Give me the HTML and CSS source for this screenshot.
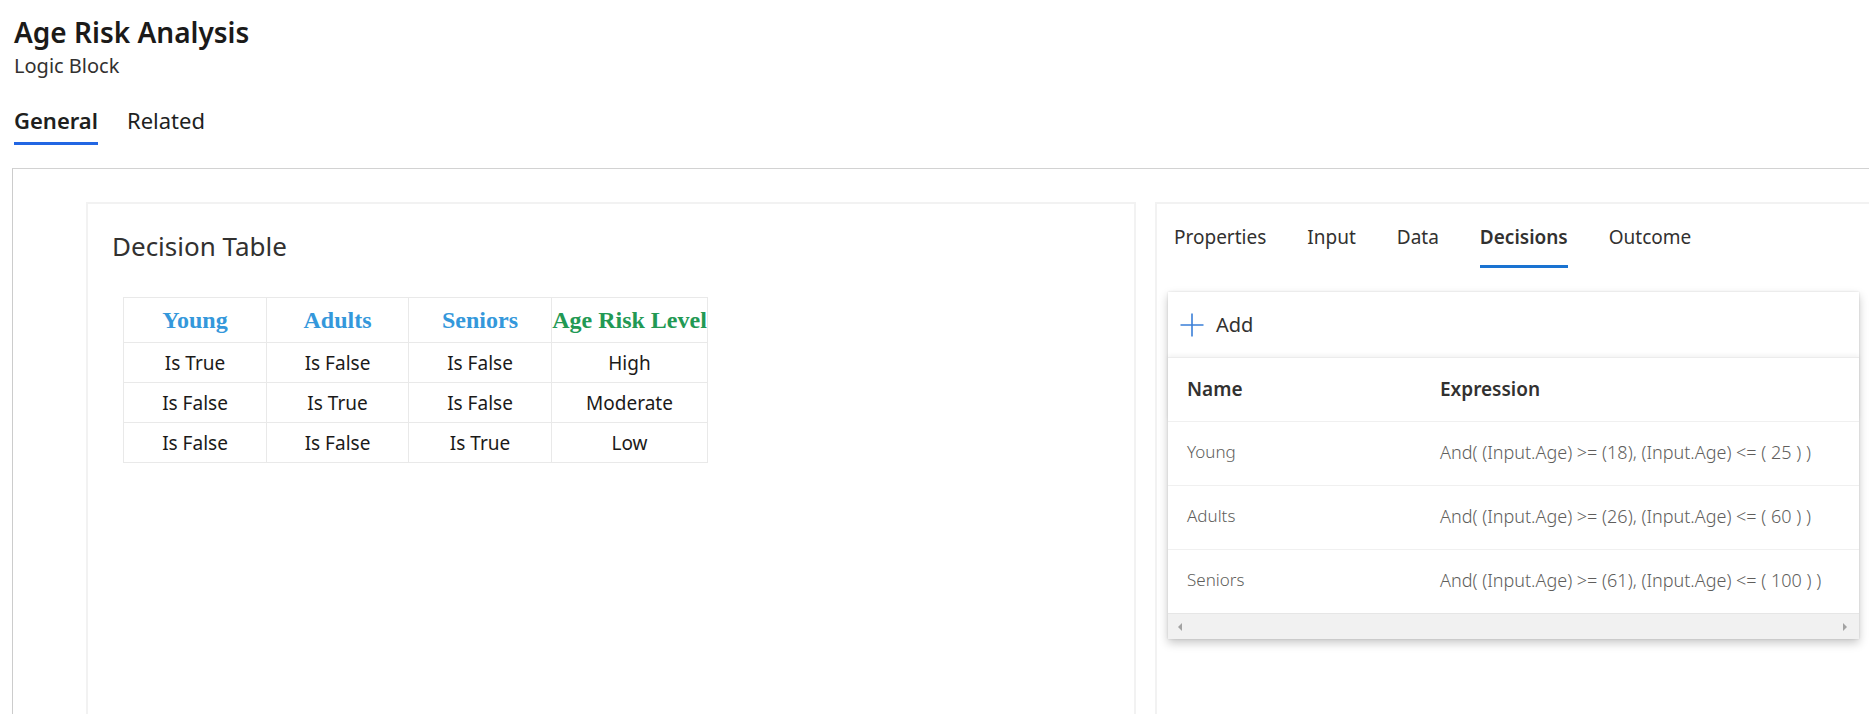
FILE: index.html
```html
<!DOCTYPE html>
<html lang="en">
<head>
<meta charset="utf-8">
<title>Age Risk Analysis</title>
<link rel="stylesheet" href="styles.css">
</head>
<body>
<header class="page-header">
  <h1 class="title">Age Risk Analysis</h1>
  <div class="subtitle">Logic Block</div>
  <nav class="main-tabs">
    <span class="main-tab active">General</span>
    <span class="main-tab">Related</span>
  </nav>
</header>

<main class="workspace">
  <section class="card decision-card">
    <h2 class="card-title">Decision Table</h2>
    <table class="decision-table">
      <colgroup>
        <col class="c1"><col class="c2"><col class="c3"><col class="c4">
      </colgroup>
      <thead>
        <tr>
          <th class="cond">Young</th>
          <th class="cond">Adults</th>
          <th class="cond">Seniors</th>
          <th class="result">Age Risk Level</th>
        </tr>
      </thead>
      <tbody>
        <tr><td>Is True</td><td>Is False</td><td>Is False</td><td>High</td></tr>
        <tr><td>Is False</td><td>Is True</td><td>Is False</td><td>Moderate</td></tr>
        <tr><td>Is False</td><td>Is False</td><td>Is True</td><td>Low</td></tr>
      </tbody>
    </table>
  </section>

  <section class="card side-card">
    <nav class="side-tabs">
      <span class="side-tab">Properties</span>
      <span class="side-tab">Input</span>
      <span class="side-tab">Data</span>
      <span class="side-tab active">Decisions</span>
      <span class="side-tab">Outcome</span>
    </nav>

    <div class="grid-card">
      <div class="toolbar">
        <svg class="plus" width="24" height="24" viewBox="0 0 24 24" aria-hidden="true">
          <path d="M12 0.5 V23.5 M0.5 12 H23.5" stroke="#3a7fd8" stroke-width="1.6" fill="none"/>
        </svg>
        <span class="add-label">Add</span>
      </div>
      <div class="grid">
        <div class="grid-row grid-head">
          <div class="col-name">Name</div>
          <div class="col-expr">Expression</div>
        </div>
        <div class="grid-row">
          <div class="col-name">Young</div>
          <div class="col-expr">And( (Input.Age) &gt;= (18), (Input.Age) &lt;= ( 25 ) )</div>
        </div>
        <div class="grid-row">
          <div class="col-name">Adults</div>
          <div class="col-expr">And( (Input.Age) &gt;= (26), (Input.Age) &lt;= ( 60 ) )</div>
        </div>
        <div class="grid-row">
          <div class="col-name">Seniors</div>
          <div class="col-expr">And( (Input.Age) &gt;= (61), (Input.Age) &lt;= ( 100 ) )</div>
        </div>
      </div>
      <div class="hscroll">
        <span class="arrow arrow-left"></span>
        <span class="arrow arrow-right"></span>
      </div>
    </div>
  </section>
</main>
</body>
</html>
```

FILE: styles.css
```css
html, body {
  margin: 0;
  padding: 0;
  overflow: hidden;
  background: #ffffff;
}

body {
  font-family: "Segoe UI", "Noto Sans", "Open Sans", sans-serif;
  color: #323130;
  width: 1869px;
  height: 714px;
}

.page-header {
  padding: 14px 0 0 14px;
}

.title {
  margin: 0;
  font-size: 28px;
  line-height: 36px;
  font-weight: 600;
  color: #1b1a19;
}

.subtitle {
  margin-top: 4px;
  font-size: 20px;
  line-height: 24px;
  color: #323130;
}

.main-tabs {
  display: flex;
  gap: 29px;
  margin-top: 28px;
}

.main-tab {
  font-size: 22px;
  line-height: 28px;
  padding-bottom: 8px;
  border-bottom: 3px solid transparent;
  color: #201f1e;
}

.main-tab.active {
  font-weight: 600;
  border-bottom-color: #2266e3;
}

.workspace {
  display: flex;
  gap: 19px;
  margin: 23px 0 0 12px;
  width: 1900px;
  height: 560px;
  padding: 33px 0 0 73px;
  border-top: 1px solid #d2d2d2;
  border-left: 1px solid #cccccc;
  box-sizing: border-box;
}

.card {
  border: 2px solid #f2f2f2;
  border-bottom: none;
  box-sizing: border-box;
  height: 600px;
  flex: none;
}

.decision-card {
  width: 1050px;
  padding: 26px 0 0 24px;
}

.card-title {
  margin: 0;
  font-size: 26px;
  line-height: 32px;
  font-weight: 400;
  color: #323130;
}

.decision-table {
  margin: 35px 0 0 11px;
  border-collapse: collapse;
  table-layout: fixed;
  width: 584px;
}

.decision-table col.c1 { width: 143px; }
.decision-table col.c2 { width: 142px; }
.decision-table col.c3 { width: 143px; }
.decision-table col.c4 { width: 156px; }

.decision-table th,
.decision-table td {
  border: 1px solid #e9e9e9;
  text-align: center;
  padding: 0;
  white-space: nowrap;
  overflow: hidden;
}

.decision-table th {
  height: 44px;
  font-family: "Liberation Serif", "Times New Roman", serif;
  font-weight: 700;
  font-size: 24px;
}

.decision-table th.cond { color: #3498db; }
.decision-table th.result { color: #229954; }

.decision-table td {
  height: 39px;
  font-size: 19px;
  color: #1b1a19;
}

.side-card {
  width: 717px;
  padding: 0 0 0 11px;
}

.side-tabs {
  display: flex;
  gap: 41px;
  padding: 19px 0 0 6px;
}

.side-tab {
  font-size: 19px;
  line-height: 28px;
  padding-bottom: 14px;
  border-bottom: 3px solid transparent;
  color: #323130;
}

.side-tab.active {
  font-weight: 600;
  border-bottom-color: #1a73d1;
}

.grid-card {
  margin-top: 24px;
  width: 691px;
  background: #ffffff;
  box-shadow: 0 4px 9px rgba(0, 0, 0, 0.22), 0 0 2px rgba(0, 0, 0, 0.12);
}

.toolbar {
  display: flex;
  align-items: center;
  gap: 12px;
  height: 65px;
  padding-left: 12px;
}

.plus { display: block; }

.add-label {
  font-size: 20px;
  color: #323130;
}

.grid-row {
  display: flex;
  align-items: center;
  height: 64px;
  padding-bottom: 4px;
  border-top: 1px solid #f0f0f0;
  box-sizing: border-box;
  font-size: 17px;
  font-weight: 300;
  color: #605e5c;
  white-space: nowrap;
}

.grid-head {
  padding-bottom: 2px;
  font-size: 19px;
  font-weight: 600;
  color: #323130;
  box-shadow: 0 -2px 4px rgba(0, 0, 0, 0.05);
  border-top: 1px solid #ececec;
}

.col-name {
  width: 253px;
  padding-left: 19px;
  box-sizing: border-box;
  flex: none;
}

.col-expr {
  flex: 1;
  padding-left: 19px;
  font-size: 18px;
}

.grid-head .col-expr {
  font-size: 19px;
}

.hscroll {
  display: flex;
  align-items: center;
  justify-content: space-between;
  height: 25px;
  padding: 0 12px 0 10px;
  background: #f1f1f1;
  border-top: 1px solid #e6e6e6;
}

.arrow {
  width: 0;
  height: 0;
  border-top: 4px solid transparent;
  border-bottom: 4px solid transparent;
}

.arrow-left { border-right: 4px solid #a3a3a3; }
.arrow-right { border-left: 4px solid #a3a3a3; }
```
